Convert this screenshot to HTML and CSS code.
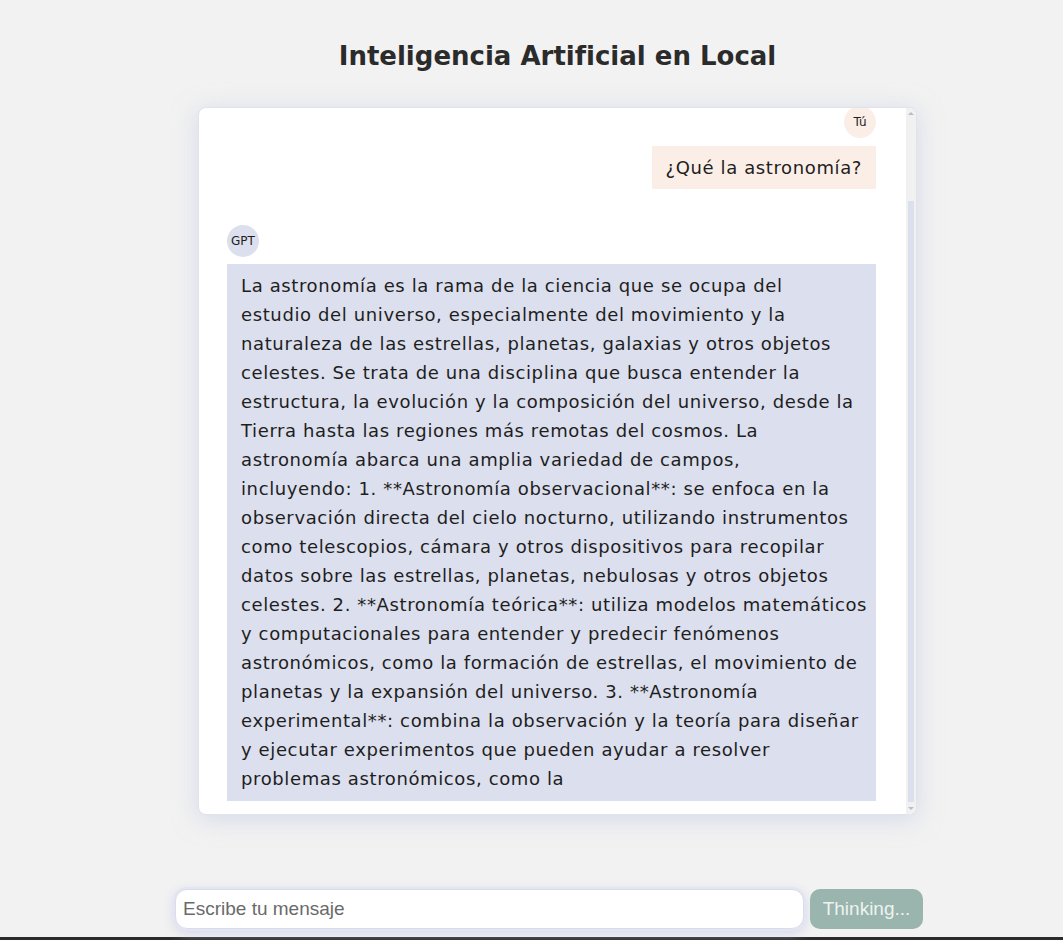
FILE: index.html
```html
<!DOCTYPE html>
<html lang="es">
<head>
<meta charset="utf-8">
<title>Inteligencia Artificial en Local</title>
<link rel="stylesheet" href="styles.css">
</head>
<body>
<main class="page">
  <section class="chat-wrap">
    <h1 class="title">Inteligencia Artificial en Local</h1>
    <div class="chat">
      <div class="messages" id="messages">
        <div class="msg msg-user">
          <div class="avatar avatar-user">Tú</div>
          <div class="bubble bubble-user">¿Qué la astronomía?</div>
        </div>
        <div class="msg msg-bot">
          <div class="avatar avatar-bot">GPT</div>
          <div class="bubble bubble-bot">La astronomía es la rama de la ciencia que se ocupa del<br>estudio del universo, especialmente del movimiento y la<br>naturaleza de las estrellas, planetas, galaxias y otros objetos<br>celestes. Se trata de una disciplina que busca entender la<br>estructura, la evolución y la composición del universo, desde la<br>Tierra hasta las regiones más remotas del cosmos. La<br>astronomía abarca una amplia variedad de campos,<br>incluyendo: 1. **Astronomía observacional**: se enfoca en la<br>observación directa del cielo nocturno, utilizando instrumentos<br>como telescopios, cámara y otros dispositivos para recopilar<br>datos sobre las estrellas, planetas, nebulosas y otros objetos<br>celestes. 2. **Astronomía teórica**: utiliza modelos matemáticos<br>y computacionales para entender y predecir fenómenos<br>astronómicos, como la formación de estrellas, el movimiento de<br>planetas y la expansión del universo. 3. **Astronomía<br>experimental**: combina la observación y la teoría para diseñar<br>y ejecutar experimentos que pueden ayudar a resolver<br>problemas astronómicos, como la</div>
        </div>
      </div>
      <div class="scrollbar" aria-hidden="true">
        <span class="sb-arrow sb-up"></span>
        <span class="sb-track"><span class="sb-thumb"></span></span>
        <span class="sb-arrow sb-down"></span>
      </div>
    </div>
  </section>
  <form class="composer">
    <input class="composer-input" type="text" placeholder="Escribe tu mensaje">
    <button class="composer-btn" type="button">Thinking...</button>
  </form>
</main>
<footer class="footer"></footer>
<script>
  var m = document.getElementById('messages');
  m.scrollTop = m.scrollHeight;
</script>
</body>
</html>
```

FILE: styles.css
```css
* { box-sizing: border-box; }

html, body {
  margin: 0;
  padding: 0;
  background: #f2f2f2;
}

body {
  font-family: "DejaVu Sans", "Open Sans", sans-serif;
  color: #1e1e1e;
  height: 940px;
  overflow: hidden;
}

.page {
  height: 937px;
  display: flex;
  flex-direction: column;
}

.chat-wrap {
  width: 719px;
  margin-left: 198px;
}

.title {
  margin: 38px 0 0;
  height: 69px;
  font-size: 26px;
  line-height: 36px;
  font-weight: 700;
  text-align: center;
  color: #2b2b2b;
}

.chat {
  position: relative;
  height: 708px;
  background: #fff;
  border: 1px solid #e1e3ec;
  border-radius: 8px;
  box-shadow: 0 4px 24px rgba(190, 196, 226, 0.55);
  overflow: hidden;
}

.messages {
  height: 706px;
  overflow-y: scroll;
  padding: 96px 40px 13px 28px;
  scrollbar-width: none;
}

.messages::-webkit-scrollbar { display: none; }

.msg {
  display: flex;
  flex-direction: column;
}

.msg-user {
  align-items: flex-end;
  margin-bottom: 36px;
}

.msg-bot {
  align-items: stretch;
}

.avatar {
  width: 32px;
  height: 32px;
  border-radius: 50%;
  display: flex;
  align-items: center;
  justify-content: center;
  font-size: 12px;
  color: #1e1e1e;
  margin-bottom: 8px;
}

.avatar-user { background: #faeee7; }

.avatar-bot {
  background: #dcdfee;
  margin-bottom: 7px;
}

.bubble {
  font-size: 18px;
  line-height: 29px;
  letter-spacing: 0.62px;
  padding: 7px 14px;
}

.bubble-user {
  background: #faeee7;
}

.bubble-bot {
  background: #dcdfed;
  padding: 7px 14px 8px;
  white-space: nowrap;
}

/* decorative scrollbar, drawn over the chat's right edge */
.scrollbar {
  position: absolute;
  top: 0;
  right: 0;
  bottom: 0;
  width: 10px;
  background: #f1f1f1;
  display: flex;
  flex-direction: column;
}

.sb-arrow {
  height: 11px;
  display: flex;
  align-items: center;
  justify-content: center;
}

.sb-up::before,
.sb-down::before {
  content: "";
  width: 0;
  height: 0;
  border-left: 3px solid transparent;
  border-right: 3px solid transparent;
}

.sb-up::before { border-bottom: 3px solid #b9bccb; }
.sb-down::before { border-top: 3px solid #b9bccb; }

.sb-track {
  flex: 1;
  padding: 82px 2px 1px;
  display: flex;
}

.sb-thumb {
  flex: 1;
  background: #dcdfee;
}

.composer {
  margin: auto 0 8px 175px;
  width: 748px;
  display: flex;
  gap: 6px;
}

.composer-input {
  flex: 1;
  height: 40px;
  border: 1px solid #d9dcec;
  border-radius: 12px;
  background: #fff;
  box-shadow: 0 0 0 2px #e3e5f2, 0 3px 12px rgba(200, 205, 232, 0.95);
  font-family: "Liberation Sans", Arial, sans-serif;
  font-size: 19px;
  padding: 0 7px;
  outline: none;
}

.composer-input::placeholder { color: #6a6a6a; }

.composer-btn {
  width: 113px;
  height: 40px;
  border: none;
  border-radius: 10px;
  background: #99b5ad;
  color: #eef3f1;
  font-family: "Liberation Sans", Arial, sans-serif;
  font-size: 19px;
  padding: 0;
}

.footer {
  height: 3px;
  background: #2b2b2b;
}
```
